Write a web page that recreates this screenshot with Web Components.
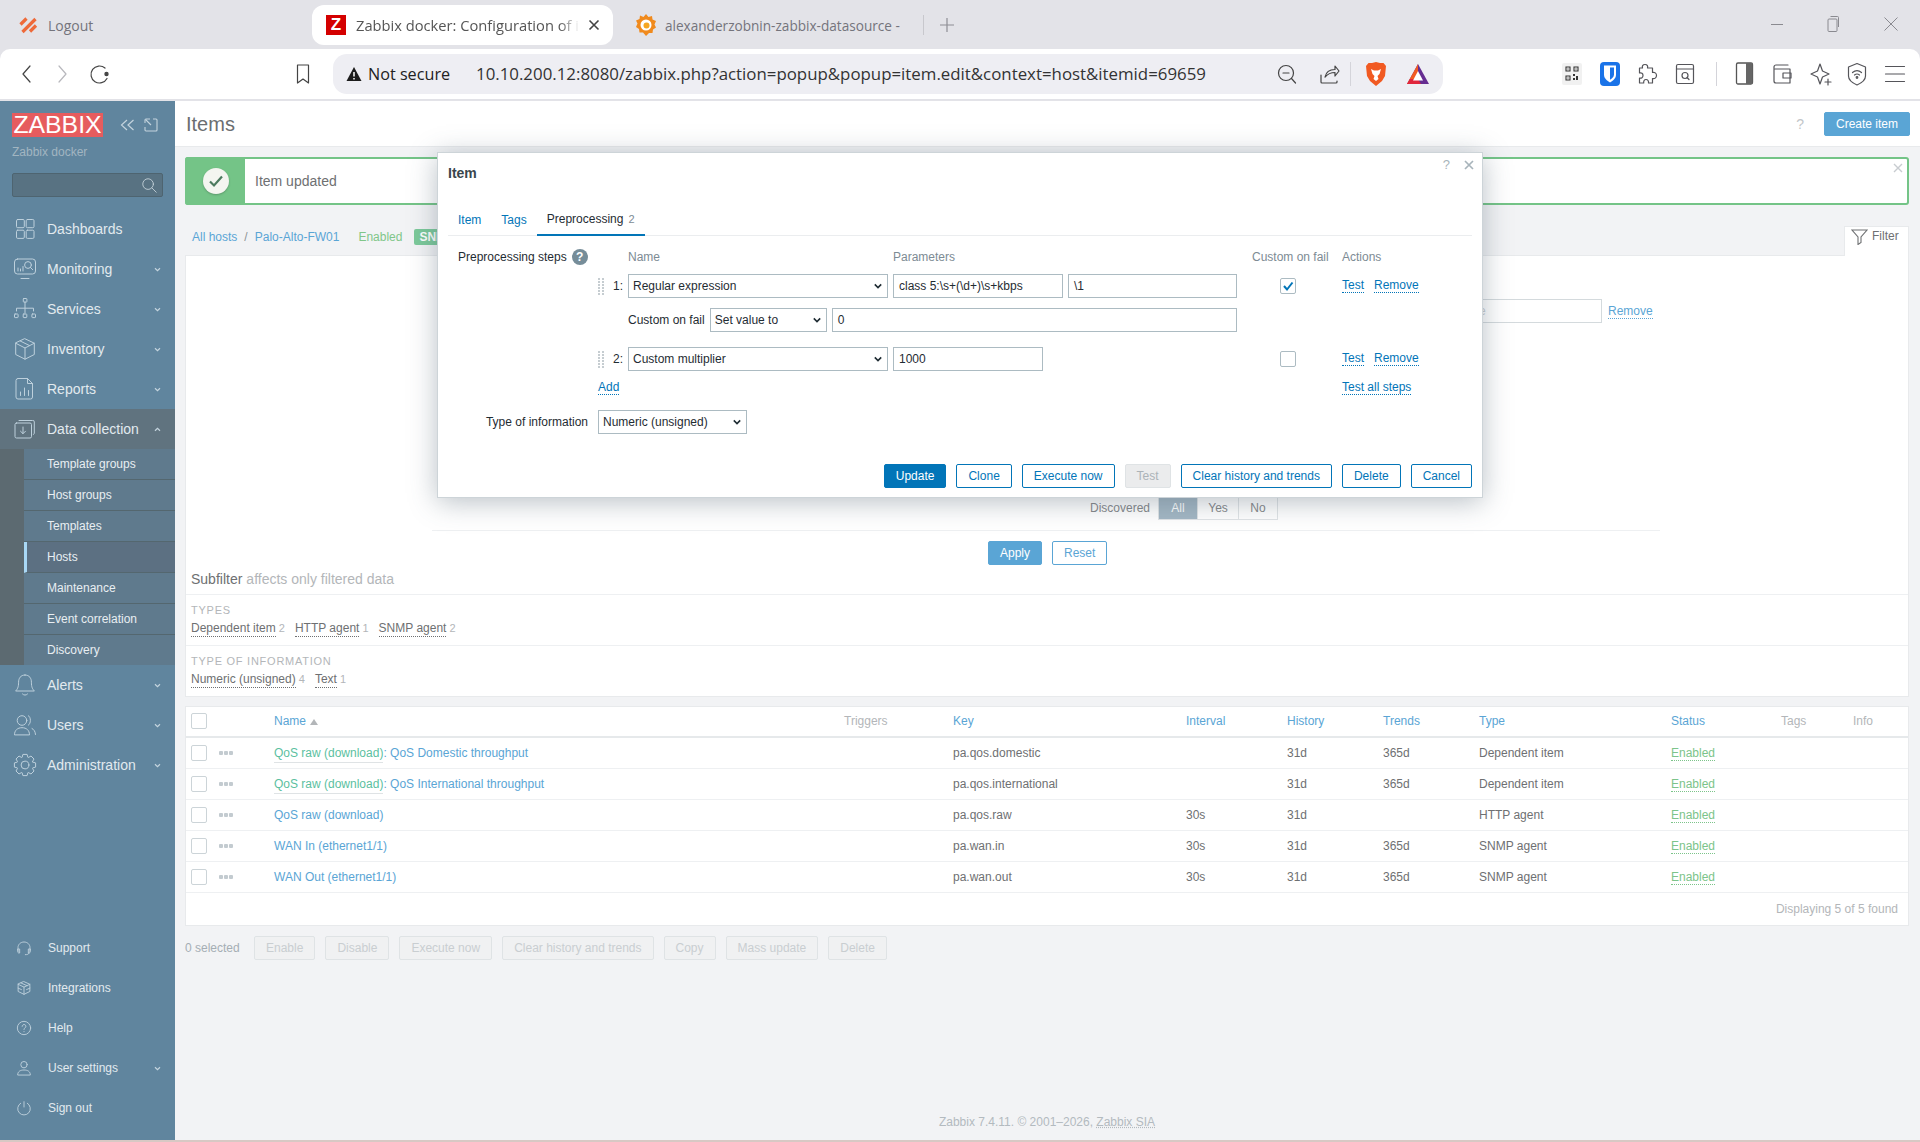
<!DOCTYPE html>
<html lang="en">
<head>
<meta charset="UTF-8">
<title>Items</title>
<style>
  html, body { margin: 0; padding: 0; }
  body { width: 1920px; height: 1142px; overflow: hidden; background: #f2f3f5; font-family: "Liberation Sans", Arial, sans-serif; font-size: 12px; }
  .page { position: relative; display: flex; flex-direction: column; width: 1920px; height: 1142px; border-bottom: 0; }
  .body { display: flex; height: 1039px; }
  .edge { height: 2px; background: #d8c8c4; }
</style>
</head>
<body>
<div class="page">
  <browser-chrome></browser-chrome>
  <div class="body">
    <zbx-sidebar></zbx-sidebar>
    <zbx-main></zbx-main>
  </div>
  <div class="edge"></div>
  <zbx-dialog></zbx-dialog>
</div>

<script>
const svg = (size, inner, extra = '') => `<svg width="${size}" height="${size}" viewBox="0 0 24 24" fill="none" stroke="currentColor" stroke-width="1.2" stroke-linecap="round" stroke-linejoin="round" ${extra}>${inner}</svg>`;

const gearPath = (() => {
  let d = '';
  for (let i = 0; i < 8; i++) {
    const a = i * Math.PI / 4;
    const pts = [[8.2, -0.36], [10.8, -0.2], [10.8, 0.2], [8.2, 0.36]];
    pts.forEach(([r, o], j) => {
      const x = (12 + r * Math.cos(a + o)).toFixed(1), y = (12 + r * Math.sin(a + o)).toFixed(1);
      d += (i === 0 && j === 0 ? 'M' : 'L') + x + ' ' + y;
    });
  }
  return d + 'Z';
})();

const ICONS = {
  dash: '<rect x="3.5" y="2.5" width="7.8" height="8.2" rx="1.2"/><rect x="13.2" y="2.5" width="7.8" height="8.2" rx="1.2"/><rect x="3.5" y="13.2" width="7.8" height="8.2" rx="1.2"/><rect x="13.2" y="13.2" width="7.8" height="8.2" rx="1.2"/>',
  monitor: '<rect x="1.5" y="2" width="21" height="15" rx="3"/><path d="M8 21.5h8M5 14v-3M7.5 14v-2M10 14V9.5"/><circle cx="15" cy="8" r="3.4"/><path d="M17.5 10.5l2.2 2.2"/>',
  services: '<rect x="10.3" y="1.5" width="3.6" height="3.6" rx=".6"/><path d="M12 5v11M3.5 14v-2.8h17V14"/><rect x="1.5" y="17" width="3.6" height="3.6" rx=".6"/><rect x="10.2" y="17" width="3.6" height="3.6" rx=".6"/><rect x="18.9" y="17" width="3.6" height="3.6" rx=".6"/>',
  cube: '<path d="M12 1.8l9.3 4.4v11.3L12 22.2l-9.3-4.7V6.2zM2.7 6.2L12 11l9.3-4.8M12 11v11.2M7.2 4l9.4 4.6"/>',
  reports: '<path d="M5 1.5h9.5l5 5V20a2 2 0 0 1-2 2H5a2 2 0 0 1-2-2V3.5a2 2 0 0 1 2-2zM14.5 1.5v5h5M7.5 18.5v-3.5M11.5 18.5V11M15.5 18.5v-5"/>',
  data: '<path d="M6 3.5h13.5a1.5 1.5 0 0 1 1.8 1.5v11a2 2 0 0 1-.8 1.5"/><rect x="2" y="7" width="16.5" height="15" rx="1.5" transform="translate(0 -1)"/><path d="M10 10v6.5M7.5 14.2l2.5 2.5 2.5-2.5"/>',
  bell: '<path d="M12 2c4.6 0 6.4 3.5 6.4 7.2 0 5 1.2 7 3 8.8H2.6c1.8-1.8 3-3.8 3-8.8C5.600 5.500 7.400 2 12 2zM9.500 21c1.500 1.500 3.500 1.500 5 0"/>',
  users: '<circle cx="9" cy="7.500" r="4.800"/><path d="M1.500 21.500c0-4.200 3-6.800 7.500-6.800s7.500 2.600 7.500 6.800zM15.500 2.800c2.600 1 2.600 8 0 9.300M19 15.500c2 1 3.300 3 3.500 6"/>',
  gear: `<path d="${gearPath}"/><circle cx="12" cy="12" r="3.900"/>`,
  headset: '<path d="M3 17v-5.500C3 6.500 7 3 12 3s9 3.500 9 8.500V17M3 13.500h2.500v6H3.800A1 1 0 0 1 3 18.500zM21 13.500h-2.500v6h1.700a1 1 0 0 0 .8-1zM19.500 19.500c-.5 2-2.500 2.500-5.500 2.500"/>',
  box: '<path d="M12 2.500l8.800 3.900v10.800L12 21.500l-8.800-4.300V6.400zM3.200 6.400L12 10.700l8.800-4.300M12 10.700v10.800M3.200 12.200l5 2.200M20.800 12.200l-5 2.200M7.500 4.500l9 4"/>',
  help: '<circle cx="12" cy="12" r="10"/><path d="M9.200 9.500a2.800 2.800 0 1 1 4.400 2.300c-1 .7-1.600 1.200-1.600 2.500"/><path d="M12 17.300v.3"/>',
  user: '<circle cx="12" cy="7" r="4.800"/><path d="M2.500 22c0-4.800 4-7 9.500-7s9.500 2.200 9.500 7z"/>',
  power: '<path d="M12 2.500v8M7 4.800a9.500 9.500 0 1 0 10 0"/>'
};

const CHEV_DOWN = '<svg width="7" height="5" viewBox="0 0 8 6" fill="none" stroke="currentColor" stroke-width="1.400"><path d="M1 1.500l3 3 3-3"/></svg>';
const CHEV_UP = '<svg width="7" height="5" viewBox="0 0 8 6" fill="none" stroke="currentColor" stroke-width="1.400"><path d="M1 4.500l3-3 3 3"/></svg>';

class BrowserChrome extends HTMLElement {
  constructor() {
    super();
    this.attachShadow({ mode: 'open' }).innerHTML = `
    <style>
      :host { display: block; width: 1920px; height: 101px; background: #e3e3e8; font-family: "Open Sans", sans-serif; }
      .strip { display: flex; align-items: center; height: 49px; font-size: 14px; color: #74747c; }
      .tab { display: flex; align-items: center; height: 40px; margin-top: 1px; }
      .t1 { width: 312px; padding-left: 19px; box-sizing: border-box; gap: 9px; }
      .t2 { width: 301px; background: #fff; border-radius: 12px; padding-left: 14px; box-sizing: border-box; color: #555; position: relative; }
      .fav { width: 20px; height: 20px; background: #d40000; color: #fff; font: bold 17px/20px "Liberation Sans", sans-serif; text-align: center; flex: none; }
      .tt { width: 226px; margin-left: 10px; white-space: nowrap; font-size: 14.700px; -webkit-mask-image: linear-gradient(90deg, #000 90%, transparent 99%); }
      .x { margin-left: 6px; color: #444; display: flex; }
      .t3 { margin-left: 22px; gap: 8px; width: 288px; }
      .t3 span { width: 246px; white-space: nowrap; font-size: 13.600px; }
      .sep1 { width: 1px; height: 20px; background: #c8c8cd; margin-top: 1px; }
      .plus { margin: 1px 0 0 16px; color: #8e8e94; display: flex; }
      .win { margin-left: auto; display: flex; color: #8a8a90; margin-right: 21px; margin-top: -1px; align-items: center; }
      .bar { display: flex; align-items: center; height: 50px; background: #fff; border-radius: 10px 10px 0 0; border-bottom: 1px solid #e2e2e7; color: #55555a; }
      .bar > svg, .url > svg { flex: none; }
      .url { display: flex; align-items: center; width: 1110px; height: 40px; margin-left: 18px; background: #eeeef3; border-radius: 14px; padding: 0 13px; box-sizing: border-box; font-size: 16.850px; color: #333; line-height: 42px; }
      .ns { width: 108px; margin-left: 6px; color: #222; font-size: 16.200px; flex: none; }
      .vsep { width: 1px; height: 24px; background: #d4d4da; flex: none; }
    </style>
    <div class="strip">
      <div class="tab t1">
        <svg width="20" height="20" viewBox="0 0 20 20" fill="none" stroke="#ee6a3a" stroke-width="3.200"><path d="M1.500 9.500l6-6M3.500 17l13-13M11 16.500l6-6"/></svg>
        <span>Logout</span>
      </div>
      <div class="tab t2">
        <div class="fav">Z</div>
        <div class="tt">Zabbix docker: Configuration of i</div>
        <div class="x"><svg width="12" height="12" viewBox="0 0 12 12" stroke="#444" stroke-width="1.600"><path d="M1.500 1.500l9 9M10.500 1.500l-9 9"/></svg></div>
      </div>
      <div class="tab t3">
        <svg width="22" height="24" viewBox="0 0 22 24"><path d="M11 1l2.500 3 3.500-1 .5 3.500 3.500 1.500-1.500 3.500 1.500 3-3 2-.5 3.500-3.500 0L11 23l-3-3.500H4.500L4 16l-3-2 1.500-3.500L1 7.500 4.500 6 5 2.500 8.500 4z" fill="#f08a1d"/><circle cx="11" cy="12" r="5.500" fill="#fff"/><circle cx="11.500" cy="12.500" r="3" fill="#f5a623"/></svg>
        <span>alexanderzobnin-zabbix-datasource -</span>
      </div>
      <div class="sep1"></div>
      <div class="plus"><svg width="14" height="14" viewBox="0 0 14 14" stroke="currentColor" stroke-width="1.200"><path d="M7 0v14M0 7h14"/></svg></div>
      <div class="win">
        <svg width="14" height="14" viewBox="0 0 14 14" stroke="currentColor"><path d="M1 7.500h12"/></svg>
        <svg style="margin-left:42px" width="14" height="18" viewBox="0 0 14 18" fill="none" stroke="currentColor"><rect x="2" y="4" width="9" height="12.500" rx="1"/><path d="M4.500 1.500h7a1 1 0 0 1 1 1V12"/></svg>
        <svg style="margin-left:43px" width="16" height="16" viewBox="0 0 16 16" stroke="currentColor"><path d="M1.500 1.500l13 13M14.500 1.500l-13 13"/></svg>
      </div>
    </div>
    <div class="bar">
      ${svg(24, '<path d="M15 4l-7 8 7 8"/>', 'style="margin-left:15px;color:#444"')}
      ${svg(24, '<path d="M9 4l7 8-7 8"/>', 'style="margin-left:11px;color:#b8b8bd"')}
      ${svg(24, '<path d="M19 16.500A8.500 8.500 0 1 1 17 6"/><circle cx="18.500" cy="12" r="1.600" fill="currentColor"/>', 'style="margin-left:14px;color:#444"')}
      ${svg(24, '<path d="M6.500 3h11v18l-5.500-4-5.500 4z"/>', 'style="margin-left:179px;color:#444"')}
      <div class="url">
        <svg width="16" height="16" viewBox="0 0 16 16"><path d="M8 1L15.500 15H.5z" fill="#1c1c1c"/><path d="M8 6v4.500M8 12v1.500" stroke="#fff" stroke-width="1.500"/></svg>
        <span class="ns">Not secure</span>
        <span>10.10.200.12:8080/zabbix.php?action=popup&amp;popup=item.edit&amp;context=host&amp;itemid=69659</span>
        ${svg(24, '<circle cx="11" cy="11" r="7.500"/><path d="M8 11h6M16.500 16.500l4 4.500"/>', 'style="margin-left:auto;color:#444"')}
        ${svg(24, '<path d="M4 13v7a1 1 0 0 0 1 1h14a1 1 0 0 0 1-1v-1M8 15c1-5 4.500-7.500 10-7.500V4l4 5-4 5v-3.500c-4 0-7 1-10 4.500z" />', 'style="margin-left:18px;color:#444"')}
        <div class="vsep" style="margin-left:9px"></div>
        <svg style="margin-left:13px;flex:none" width="24" height="26" viewBox="0 0 24 26"><path d="M12 1l4 1 3.500 0 2.500 3-1 10-3 5-6 5-6-5-3-5L2 5l2.500-3L8 2z" fill="#f15a22"/><path d="M7 8l3 1.500h4L17 8l-1.500 5-2 2 1 3-2.500 2-2.500-2 1-3-2-2z" fill="#fff"/></svg>
        <svg style="margin-left:18px;flex:none" width="24" height="24" viewBox="0 0 24 24"><path d="M12 2L23 22H1z" fill="#662d91"/><path d="M12 2L1 22h7l4-8z" fill="#f15a22"/><path d="M1 22h14l-3-5H4z" fill="#e0263c"/><path d="M12 9l5 9.500H7z" fill="#fff"/></svg>
      </div>
      <svg style="margin-left:117px" width="24" height="24" viewBox="0 0 24 24"><rect x="2" y="1" width="20" height="22" rx="2" fill="#f1f1f1"/><path d="M6 5h4v4H6zM14 5h4v4h-4zM6 14h4v4H6z" fill="none" stroke="#333" stroke-width="1.100"/><path d="M7.500 6.500h1v1h-1zM15.500 6.500h1v1h-1zM7.500 15.500h1v1h-1zM13 12h2v2h-2zM16 14h2v4h-2zM13 16h2v2h-2z" fill="#333"/></svg>
      <svg style="margin-left:14px" width="24" height="24" viewBox="0 0 24 24"><rect x="2" y="0" width="20" height="24" rx="4" fill="#1a73e8"/><path d="M6 3.500h12v9c0 4-3 6-6 8-3-2-6-4-6-8z" fill="#fff"/><path d="M12 5.500h4v7c0 2.500-2 4-4 5.200z" fill="#1a73e8"/></svg>
      ${svg(24, '<path d="M9 2.500c2.500 0 3 1.800 2.500 3.500h5v4.500c2-.5 4 .5 4 3s-2 3.500-4 3v4.500h-4c.3-2-.7-3.500-2.500-3.500S7.500 19 7.700 21H3.500v-5c2 .5 3.500-.5 3.500-2.500S5.500 10.500 3.500 11V6h3c-.5-1.700 0-3.500 2.500-3.500z"/>', 'style="margin-left:14px"')}
      ${svg(24, '<rect x="3.500" y="2.500" width="17" height="19" rx="1.500"/><path d="M3.500 7h17"/><circle cx="12" cy="13.500" r="3"/><path d="M14 15.500l2 2"/>', 'style="margin-left:13px"')}
      <div class="vsep" style="margin-left:19px"></div>
      <svg style="margin-left:16px" width="24" height="26" viewBox="0 0 24 26"><rect x="3.500" y="2" width="16" height="21" rx="1.500" fill="#fff" stroke="#555" stroke-width="1.300"/><rect x="13" y="2" width="6.500" height="21" fill="#666"/></svg>
      ${svg(24, '<path d="M18 3H6a2 2 0 0 0-2 2v14a2 2 0 0 0 2 2h14V7H5"/><rect x="13" y="11" width="8" height="5"/>', 'style="margin-left:13px"')}
      ${svg(24, '<path d="M11 2l2.500 7 6.500 3-6.500 3-2.500 7-2.500-7L2 12l6.500-3zM19 17v6M16 20h6"/>', 'style="margin-left:15px"')}
      ${svg(24, '<path d="M12 1.500l8.500 3.500v9c0 4-4 7-8.500 9-4.500-2-8.500-5-8.500-9V5zM7.500 10.500c3-2.500 6-2.500 9 0M9.500 13c1.500-1.200 3.500-1.200 5 0"/><circle cx="12" cy="15.500" r=".8"/>', 'style="margin-left:12px"')}
      ${svg(24, '<path d="M2.500 4.500h19M2.500 12h19M2.500 19.500h19"/>', 'style="margin-left:14px"')}
    </div>`;
  }
}
customElements.define('browser-chrome', BrowserChrome);

class ZbxNav extends HTMLElement {
  constructor() {
    super();
    this.attachShadow({ mode: 'open' });
  }
  connectedCallback() {
    const small = this.hasAttribute('small');
    const chev = this.getAttribute('chev');
    this.shadowRoot.innerHTML = `
    <style>
      :host { display: flex; align-items: center; height: 40px; position: relative; color: #e2eaef; font-size: ${small ? 12 : 14}px; }
      :host([active]) { background: #60737f; }
      .ic { width: ${small ? 48 : 47}px; display: flex; justify-content: center; flex: none; padding-left: ${small ? 0 : 3}px; box-sizing: border-box; color: #bdd0dc; }
      .ic svg { stroke-width: ${small ? 1.4 : 1}; }
      .lb { flex: 1; }
      .ch { width: 7px; margin-right: 14px; display: flex; color: #c5d5df; }
    </style>
    <div class="ic">${svg(small ? 16 : 24, ICONS[this.getAttribute('icon')])}</div>
    <div class="lb"><slot></slot></div>
    ${chev ? `<div class="ch">${chev === 'up' ? CHEV_UP : CHEV_DOWN}</div>` : ''}`;
  }
}
customElements.define('zbx-nav', ZbxNav);

class ZbxSub extends HTMLElement {
  constructor() {
    super();
    this.attachShadow({ mode: 'open' }).innerHTML = `
    <style>
      :host { display: flex; align-items: center; height: 30px; padding-left: 23px; border-bottom: 1px solid #54676f; color: #e8eef2; background: #5f7a8d; }
      :host(:last-child) { border-bottom: 0; }
      :host([active]) { padding-left: 20px; border-left: 3px solid #a9d8f5; background: #5c7082; }
    </style>
    <slot></slot>`;
  }
}
customElements.define('zbx-sub', ZbxSub);

class ZbxSidebar extends HTMLElement {
  constructor() {
    super();
    this.attachShadow({ mode: 'open' }).innerHTML = `
    <style>
      :host { display: flex; flex-direction: column; width: 175px; flex: none; background: #60859e; }
      .top { padding: 12px 12px 0; }
      .logo-row { display: flex; align-items: center; }
      .logo { width: 91px; height: 24px; background: #e65c5e; color: #fff; font-size: 24.800px; line-height: 24px; text-align: center; white-space: nowrap; }
      .tools { display: flex; color: #c3d3dd; margin-left: 17px; gap: 9px; align-items: center; }
      .srv { color: #a2b5c1; font-size: 12px; height: 14px; line-height: 14px; margin-top: 8px; }
      .search { height: 24px; box-sizing: border-box; margin: 14px 0 12px; border: 1px solid #4e6470; border-radius: 2px; background: #587282; display: flex; justify-content: flex-end; align-items: center; color: #c9d6dd; padding-right: 4px; }
      .subwrap { background: #5c6a71; padding-left: 24px; }
      .bottom { margin-top: auto; padding-bottom: 12px; }
    </style>
    <div class="top">
      <div class="logo-row">
        <div class="logo">ZABBIX</div>
        <div class="tools">
          <svg width="15" height="12" viewBox="0 0 15 12" fill="none" stroke="currentColor" stroke-width="1.200"><path d="M7 1L1.500 6 7 11M13.500 1L8 6l5.500 5"/></svg>
          <svg width="14" height="14" viewBox="0 0 14 14" fill="none" stroke="currentColor" stroke-width="1.100"><path d="M6 1H2a1 1 0 0 0-1 1v3M9 1h3a1 1 0 0 1 1 1v10a1 1 0 0 1-1 1H2a1 1 0 0 1-1-1V9M2 2l5 5"/></svg>
        </div>
      </div>
      <div class="srv">Zabbix docker</div>
      <div class="search">${svg(17, '<circle cx="10" cy="10" r="7.500"/><path d="M15.500 15.500l6 6"/>')}</div>
    </div>
    <zbx-nav icon="dash">Dashboards</zbx-nav>
    <zbx-nav icon="monitor" chev="down">Monitoring</zbx-nav>
    <zbx-nav icon="services" chev="down">Services</zbx-nav>
    <zbx-nav icon="cube" chev="down">Inventory</zbx-nav>
    <zbx-nav icon="reports" chev="down">Reports</zbx-nav>
    <zbx-nav icon="data" chev="up" active>Data collection</zbx-nav>
    <div class="subwrap">
      <zbx-sub>Template groups</zbx-sub>
      <zbx-sub>Host groups</zbx-sub>
      <zbx-sub>Templates</zbx-sub>
      <zbx-sub active>Hosts</zbx-sub>
      <zbx-sub>Maintenance</zbx-sub>
      <zbx-sub>Event correlation</zbx-sub>
      <zbx-sub>Discovery</zbx-sub>
    </div>
    <zbx-nav icon="bell" chev="down">Alerts</zbx-nav>
    <zbx-nav icon="users" chev="down">Users</zbx-nav>
    <zbx-nav icon="gear" chev="down">Administration</zbx-nav>
    <div class="bottom">
      <zbx-nav small icon="headset">Support</zbx-nav>
      <zbx-nav small icon="box">Integrations</zbx-nav>
      <zbx-nav small icon="help">Help</zbx-nav>
      <zbx-nav small icon="user" chev="down">User settings</zbx-nav>
      <zbx-nav small icon="power">Sign out</zbx-nav>
    </div>`;
  }
}
customElements.define('zbx-sidebar', ZbxSidebar);

const MUTED_BTN = `
  .btn { display: inline-flex; align-items: center; height: 24px; box-sizing: border-box; padding: 0 11px; border-radius: 2px; border: 1px solid #5aa5d5; color: #5aa5d5; background: #fff; white-space: nowrap; }
  .btn.fill { background: #5aa5d5; color: #fff; }
`;

class ZbxHeader extends HTMLElement {
  constructor() {
    super();
    this.attachShadow({ mode: 'open' }).innerHTML = `
    <style>${MUTED_BTN}
      :host { display: flex; align-items: center; height: 45px; background: #fff; border-bottom: 1px solid #e8eaec; padding: 0 10px 0 11px; box-sizing: content-box; }
      h1 { margin: 1px 0 0; font-weight: normal; font-size: 20px; color: #6b6e71; flex: 1; }
      .q { color: #c2c6c9; font-size: 14px; margin-right: 20px; }
    </style>
    <h1><slot></slot></h1>
    <span class="q">?</span>
    <span class="btn fill">Create item</span>`;
  }
}
customElements.define('zbx-header', ZbxHeader);

class ZbxMessage extends HTMLElement {
  constructor() {
    super();
    this.attachShadow({ mode: 'open' }).innerHTML = `
    <style>
      :host { display: flex; height: 48px; box-sizing: border-box; margin-top: 10px; background: #fff; border: 2px solid #74c487; border-left: 0; border-radius: 3px; font-size: 14px; color: #6e7072; position: relative; }
      .g { width: 60px; background: #74c487; display: flex; align-items: center; justify-content: center; border-radius: 3px 0 0 3px; margin: -2px 0; padding-left: 2px; box-sizing: border-box; }
      .c { width: 26px; height: 26px; border-radius: 50%; background: #f4f5f0; display: flex; align-items: center; justify-content: center; box-shadow: 0 1px 2px rgba(60,90,70,.4); }
      .t { margin-left: 10px; align-self: center; flex: 1; }
      .x { position: absolute; right: 4px; top: 4px; color: #c8ccd0; display: flex; }
    </style>
    <div class="g"><div class="c"><svg width="16" height="14" viewBox="0 0 16 14" fill="none" stroke="#4d7a5f" stroke-width="2.200"><path d="M2 7.500L6 11.500 14 2.500"/></svg></div></div>
    <div class="t"><slot></slot></div>
    <div class="x"><svg width="10" height="10" viewBox="0 0 10 10" stroke="currentColor" stroke-width="1.400"><path d="M1 1l8 8M9 1l-8 8"/></svg></div>`;
  }
}
customElements.define('zbx-message', ZbxMessage);

class ZbxCrumbs extends HTMLElement {
  constructor() {
    super();
    this.attachShadow({ mode: 'open' }).innerHTML = `
    <style>
      :host { display: flex; align-items: flex-end; height: 50px; }
      .links { display: flex; align-items: center; height: 17px; margin: 0 auto 10px 7px; color: #5aa5d5; }
      .sl { margin: 0 7px; color: #8f9396; }
      .en { margin-left: 19px; color: #80c689; }
      .tag { margin-left: 12px; height: 16px; line-height: 16px; padding: 0 5px; background: #7bc99a; color: #fff; border-radius: 2px; font-weight: bold; }
      .ftab { position: relative; z-index: 1; margin-bottom: -1px; width: 65px; height: 30px; box-sizing: border-box; background: #fff; border: 1px solid #e8eaec; border-bottom: 0; display: flex; align-items: flex-start; padding: 2px 0 0 6px; gap: 4px; color: #6e7072; line-height: 15px; }
    </style>
    <div class="links"><span>All hosts</span><span class="sl">/</span><span>Palo-Alto-FW01</span><span class="en">Enabled</span><span class="tag">SNMP</span></div>
    <div class="ftab"><svg width="17" height="16" viewBox="0 0 17 16" fill="none" stroke="#6e7072" stroke-width="1.100"><path d="M1 1h15L10 8v5.500l-3 2V8z"/></svg><span>Filter</span></div>`;
  }
}
customElements.define('zbx-crumbs', ZbxCrumbs);

class ZbxSubfilter extends HTMLElement {
  constructor() {
    super();
    this.attachShadow({ mode: 'open' }).innerHTML = `
    <style>
      :host { display: block; padding: 0 5px; border-bottom: 1px solid #eef0f2; height: 50px; box-sizing: content-box; }
      .h { font-size: 11px; letter-spacing: .75px; color: #b3b6b9; line-height: 14px; padding-top: 8px; }
      .r { display: flex; margin-top: 4px; line-height: 14px; }
    </style>
    <div class="h"><slot name="title"></slot></div>
    <div class="r"><slot></slot></div>`;
  }
}
customElements.define('zbx-subfilter', ZbxSubfilter);

class ZbxChip extends HTMLElement {
  constructor() {
    super();
    this.attachShadow({ mode: 'open' }).innerHTML = `
    <style>
      :host { display: inline-block; margin-right: 10px; color: #b3b6b9; font-size: 11px; }
      a { font-size: 12px; color: #6e7072; border-bottom: 1px dotted #6e7072; padding-bottom: 1px; }
    </style>
    <a><slot></slot></a> ${this.getAttribute('n')}`;
  }
}
customElements.define('zbx-chip', ZbxChip);

class ZbxFilter extends HTMLElement {
  constructor() {
    super();
    this.attachShadow({ mode: 'open' }).innerHTML = `
    <style>${MUTED_BTN}
      :host { display: block; background: #fff; border: 1px solid #e8eaec; position: relative; }
      .r1 { display: flex; align-items: center; margin: 43px 0 0 1270px; color: #5aa5d5; gap: 6px; }
      .in { width: 146px; height: 24px; box-sizing: border-box; border: 1px solid #d4dadd; color: #c9cdd0; line-height: 22px; }
      .rm { border-bottom: 1px dotted #5aa5d5; line-height: 14px; }
      .disc { display: flex; align-items: center; margin: 173px 0 0 904px; height: 24px; color: #85888b; }
      .seg { display: flex; margin-left: 8px; height: 24px; box-sizing: border-box; border: 1px solid #e0e4e6; color: #85888b; }
      .seg span { display: flex; align-items: center; justify-content: center; border-right: 1px solid #e0e4e6; }
      .seg span:last-child { border-right: 0; }
      .seg .on { background: #a3b7c4; color: #fff; }
      .line { height: 1px; background: #eef0f2; margin: 10px 0 0 246px; width: 1228px; }
      .act { display: flex; gap: 10px; margin: 10px 0 0 802px; }
      .sf { display: flex; align-items: center; height: 28px; padding: 0 0 1px 5px; font-size: 14px; color: #6e7072; border-bottom: 1px solid #eef0f2; }
      .sf i { font-style: normal; color: #b3b6b9; margin-left: 4px; }
    </style>
    <div class="r1"><div class="in">value</div><span class="rm">Remove</span></div>
    <div class="disc">Discovered<div class="seg"><span class="on" style="width:38px">All</span><span style="width:40px">Yes</span><span style="width:38px">No</span></div></div>
    <div class="line"></div>
    <div class="act"><span class="btn fill">Apply</span><span class="btn">Reset</span></div>
    <div class="sf">Subfilter<i>affects only filtered data</i></div>
    <slot></slot>`;
  }
}
customElements.define('zbx-filter', ZbxFilter);

class ZbxTable extends HTMLElement {
  constructor() {
    super();
    const rows = [
      ['QoS raw (download)', ': QoS Domestic throughput', 'pa.qos.domestic', '', '31d', '365d', 'Dependent item'],
      ['QoS raw (download)', ': QoS International throughput', 'pa.qos.international', '', '31d', '365d', 'Dependent item'],
      ['', 'QoS raw (download)', 'pa.qos.raw', '30s', '31d', '', 'HTTP agent'],
      ['', 'WAN In (ethernet1/1)', 'pa.wan.in', '30s', '31d', '365d', 'SNMP agent'],
      ['', 'WAN Out (ethernet1/1)', 'pa.wan.out', '30s', '31d', '365d', 'SNMP agent']
    ];
    const ck = '<span class="ck"></span>';
    const body = rows.map(r => `
      <div class="row">
        <div>${ck}</div><div class="dots"><i></i><i></i><i></i></div>
        <div class="nm">${r[0] ? `<a class="tl">${r[0]}</a>` : ''}<a>${r[1]}</a></div>
        <div></div><div>${r[2]}</div><div>${r[3]}</div><div>${r[4]}</div><div>${r[5]}</div><div>${r[6]}</div>
        <div><a class="st">Enabled</a></div><div></div><div></div>
      </div>`).join('');
    this.attachShadow({ mode: 'open' }).innerHTML = `
    <style>
      :host { display: block; background: #fff; border: 1px solid #e8eaec; margin-top: 9px; color: #6e7072; }
      .row { display: grid; grid-template-columns: 28px 55px 570px 109px 233px 101px 96px 96px 192px 110px 72px 56px; align-items: center; height: 30px; padding-left: 5px; border-bottom: 1px solid #eef0f2; }
      .hd { height: 27px; padding-bottom: 2px; border-bottom: 2px solid #e6e9eb; color: #5aa5d5; }
      .hd .off { color: #b3b6b9; }
      .ck { display: block; width: 16px; height: 16px; box-sizing: border-box; border: 1px solid #ccd4d8; border-radius: 2px; background: #fff; }
      .dots { display: flex; gap: 1px; }
      .dots i { width: 4px; height: 4px; background: #c3cbd0; border-radius: 1px; }
      .nm { color: #5aa5d5; white-space: nowrap; }
      .tl { color: #5cbf9f; border-bottom: 1px solid #dfe3e5; padding-bottom: 2px; }
      .st { color: #7cc48a; border-bottom: 1px dotted #7cc48a; }
      .arrow { display: inline-block; width: 0; height: 0; border: 4px solid transparent; border-bottom: 6px solid #b3b6b9; border-top: 0; margin-left: 4px; }
      .foot { height: 32px; display: flex; align-items: center; justify-content: flex-end; padding-right: 10px; color: #b3b6b9; }
    </style>
    <div class="row hd"><div>${ck}</div><div></div><div>Name<span class="arrow"></span></div><div class="off">Triggers</div><div>Key</div><div>Interval</div><div>History</div><div>Trends</div><div>Type</div><div>Status</div><div class="off">Tags</div><div class="off">Info</div></div>
    ${body}
    <div class="foot">Displaying 5 of 5 found</div>`;
  }
}
customElements.define('zbx-table', ZbxTable);

class ZbxActions extends HTMLElement {
  constructor() {
    super();
    const names = ['Enable', 'Disable', 'Execute now', 'Clear history and trends', 'Copy', 'Mass update', 'Delete'];
    this.attachShadow({ mode: 'open' }).innerHTML = `
    <style>
      :host { display: flex; align-items: center; gap: 10px; margin-top: 10px; color: #a5aeb4; }
      .cnt { margin-right: 5px; width: 54px; white-space: nowrap; flex: none; }
      .b { display: flex; align-items: center; height: 24px; box-sizing: border-box; padding: 0 11px; border: 1px solid #dfe3e5; border-radius: 2px; background: #f0f1f2; color: #c9ced1; white-space: nowrap; }
    </style>
    <span class="cnt">0 selected</span>
    ${names.map(n => `<span class="b">${n}</span>`).join('')}`;
  }
}
customElements.define('zbx-actions', ZbxActions);

class ZbxFooter extends HTMLElement {
  constructor() {
    super();
    this.attachShadow({ mode: 'open' }).innerHTML = `
    <style>
      :host { display: block; margin-top: auto; padding-bottom: 11px; text-align: center; color: #b3babf; line-height: 14px; }
      a { text-decoration: underline dotted; }
    </style>
    Zabbix 7.4.11. © 2001–2026, <a>Zabbix SIA</a>`;
  }
}
customElements.define('zbx-footer', ZbxFooter);

class ZbxMain extends HTMLElement {
  constructor() {
    super();
    this.attachShadow({ mode: 'open' }).innerHTML = `
    <style>
      :host { display: flex; flex-direction: column; flex: 1; min-width: 0; }
      .wrap { display: flex; flex-direction: column; flex: 1; margin: 0 11px 0 10px; }
    </style>
    <zbx-header>Items</zbx-header>
    <div class="wrap">
      <zbx-message>Item updated</zbx-message>
      <zbx-crumbs></zbx-crumbs>
      <zbx-filter>
        <zbx-subfilter><span slot="title">TYPES</span><zbx-chip n="2">Dependent item</zbx-chip><zbx-chip n="1">HTTP agent</zbx-chip><zbx-chip n="2">SNMP agent</zbx-chip></zbx-subfilter>
        <zbx-subfilter style="border-bottom:0"><span slot="title">TYPE OF INFORMATION</span><zbx-chip n="4">Numeric (unsigned)</zbx-chip><zbx-chip n="1">Text</zbx-chip></zbx-subfilter>
      </zbx-filter>
      <zbx-table></zbx-table>
      <zbx-actions></zbx-actions>
      <zbx-footer></zbx-footer>
    </div>`;
  }
}
customElements.define('zbx-main', ZbxMain);

const SELECT_ARROW = '<svg width="8" height="6" viewBox="0 0 10 7" fill="none" stroke="#1f2c33" stroke-width="2"><path d="M1 1.500l4 4 4-4"/></svg>';

class ZbxField extends HTMLElement {
  constructor() {
    super();
    this.attachShadow({ mode: 'open' });
  }
  connectedCallback() {
    const isSelect = this.hasAttribute('select');
    this.shadowRoot.innerHTML = `
    <style>
      :host { display: flex; align-items: center; justify-content: space-between; flex: none; width: ${this.getAttribute('w')}px; height: 24px; box-sizing: border-box; border: 1px solid #acbbc2; padding: 0 ${isSelect ? 5 : 4}px 0 ${isSelect ? 4 : 5}px; background: #fff; color: #1f2c33; white-space: nowrap; }
    </style>
    <span><slot></slot></span>${isSelect ? SELECT_ARROW : ''}`;
  }
}
customElements.define('zbx-field', ZbxField);

class ZbxDialog extends HTMLElement {
  constructor() {
    super();
    const handle = `<svg class="drag" width="6" height="17" viewBox="0 0 6 17" fill="#c6cdd1">${[0,1,2,3,4,5].map(i => `<rect x="0" y="${i*3}" width="2" height="2"/><rect x="4" y="${i*3}" width="2" height="2"/>`).join('')}</svg>`;
    this.attachShadow({ mode: 'open' }).innerHTML = `
    <style>
      :host { position: absolute; left: 437px; top: 152px; width: 1046px; height: 346px; box-sizing: border-box; background: #fff; border: 1px solid #cdd4d8; box-shadow: 0 4px 26px rgba(70,90,105,.38); display: flex; flex-direction: column; padding: 0 10px; color: #1f2c33; }
      .top { position: absolute; right: 8px; top: 4px; display: flex; align-items: center; gap: 14px; color: #a8b4bb; }
      .title { font-size: 14px; font-weight: bold; height: 20px; line-height: 20px; margin-top: 10px; color: #39464d; }
      .tabs { display: flex; border-bottom: 1px solid #ebedef; height: 30px; margin-top: 22px; }
      .tabs a { display: flex; align-items: center; color: #0275b8; padding: 0 10px; height: 29px; }
      .tabs a.on { color: #1f2c33; border-bottom: 2px solid #0275b8; box-sizing: border-box; height: 31px; padding-bottom: 1px; }
      .tabs sup { font-size: 11px; color: #7d8b94; vertical-align: baseline; margin-left: 5px; line-height: 1; }
      .form { display: grid; grid-template-columns: 150px 30px 265px 359px 90px 1fr; margin-top: 9px; align-items: center; }
      .form > * { min-width: 0; }
      .h { height: 24px; display: flex; align-items: center; color: #7d8b94; }
      .lbl { display: flex; align-items: center; padding-left: 10px; gap: 5px; height: 24px; }
      .help { width: 16px; height: 16px; border-radius: 50%; background: #768d99; color: #fff; font-weight: bold; font-size: 12px; display: flex; align-items: center; justify-content: center; }
      .num { display: flex; align-items: center; height: 24px; justify-content: space-between; padding-right: 5px; }
      .f { display: flex; align-items: center; gap: 5px; }
      .mt5 { margin-top: 5px; } .mt10 { margin-top: 10px; } .mt15 { margin-top: 15px; }
      .ck { width: 16px; height: 16px; box-sizing: border-box; border: 1px solid #acbbc2; border-radius: 2px; margin: -1px 0 0 28px; display: flex; align-items: center; justify-content: center; }
      .acts { display: flex; gap: 10px; height: 24px; align-items: center; }
      a.l { color: #0275b8; border-bottom: 1px dotted #0275b8; line-height: 13px; }
      .rlbl { text-align: right; padding-right: 10px; height: 24px; line-height: 24px; }
      .foot { margin-top: auto; margin-bottom: 9px; display: flex; justify-content: flex-end; gap: 10px; }
      .b { display: flex; align-items: center; height: 24px; box-sizing: border-box; padding: 0 11px; border: 1px solid #0275b8; border-radius: 2px; color: #0275b8; background: #fff; white-space: nowrap; }
      .b.pri { background: #0275b8; color: #fff; }
      .b.dis { background: #ebeced; border-color: #dfe3e5; color: #acb3b8; }
    </style>
    <div class="top">
      <span style="font-size:13px">?</span>
      <svg width="10" height="10" viewBox="0 0 10 10" stroke="currentColor" stroke-width="1.700"><path d="M1 1l8 8M9 1l-8 8"/></svg>
    </div>
    <div class="title">Item</div>
    <div class="tabs"><a>Item</a><a>Tags</a><a class="on">Preprocessing<sup>2</sup></a></div>
    <div class="form">
      <div class="lbl">Preprocessing steps<span class="help">?</span></div><div></div>
      <div class="h">Name</div><div class="h">Parameters</div><div class="h">Custom on fail</div><div class="h">Actions</div>

      <div class="mt5"></div><div class="num mt5">${handle}<span>1:</span></div>
      <div class="mt5"><zbx-field select w="260">Regular expression</zbx-field></div>
      <div class="f mt5"><zbx-field w="170">class 5:\\s+(\\d+)\\s+kbps</zbx-field><zbx-field w="169">\\1</zbx-field></div>
      <div class="mt5"><div class="ck"><svg width="12" height="12" viewBox="0 0 12 12" fill="none" stroke="#0275b8" stroke-width="2"><path d="M2 6l3 3.500 5.500-7"/></svg></div></div>
      <div class="acts mt5"><a class="l">Test</a><a class="l">Remove</a></div>

      <div class="mt10"></div><div class="mt10"></div>
      <div class="f mt10" style="grid-column: span 2">Custom on fail<zbx-field select w="117">Set value to</zbx-field><zbx-field w="405">0</zbx-field></div>
      <div class="mt10"></div><div class="mt10"></div>

      <div class="mt15"></div><div class="num mt15">${handle}<span>2:</span></div>
      <div class="mt15"><zbx-field select w="260">Custom multiplier</zbx-field></div>
      <div class="mt15"><zbx-field w="150">1000</zbx-field></div>
      <div class="mt15"><div class="ck"></div></div>
      <div class="acts mt15"><a class="l">Test</a><a class="l">Remove</a></div>

      <div class="mt5"></div>
      <div class="mt5" style="grid-column: span 4; height: 24px; display: flex; align-items: center"><a class="l">Add</a></div>
      <div class="acts mt5"><a class="l">Test all steps</a></div>

      <div class="rlbl mt10">Type of information</div>
      <div class="mt10" style="grid-column: span 5"><zbx-field select w="149">Numeric (unsigned)</zbx-field></div>
    </div>
    <div class="foot">
      <span class="b pri">Update</span><span class="b">Clone</span><span class="b">Execute now</span><span class="b dis">Test</span><span class="b">Clear history and trends</span><span class="b">Delete</span><span class="b">Cancel</span>
    </div>`;
  }
}
customElements.define('zbx-dialog', ZbxDialog);
</script>
</body>
</html>
